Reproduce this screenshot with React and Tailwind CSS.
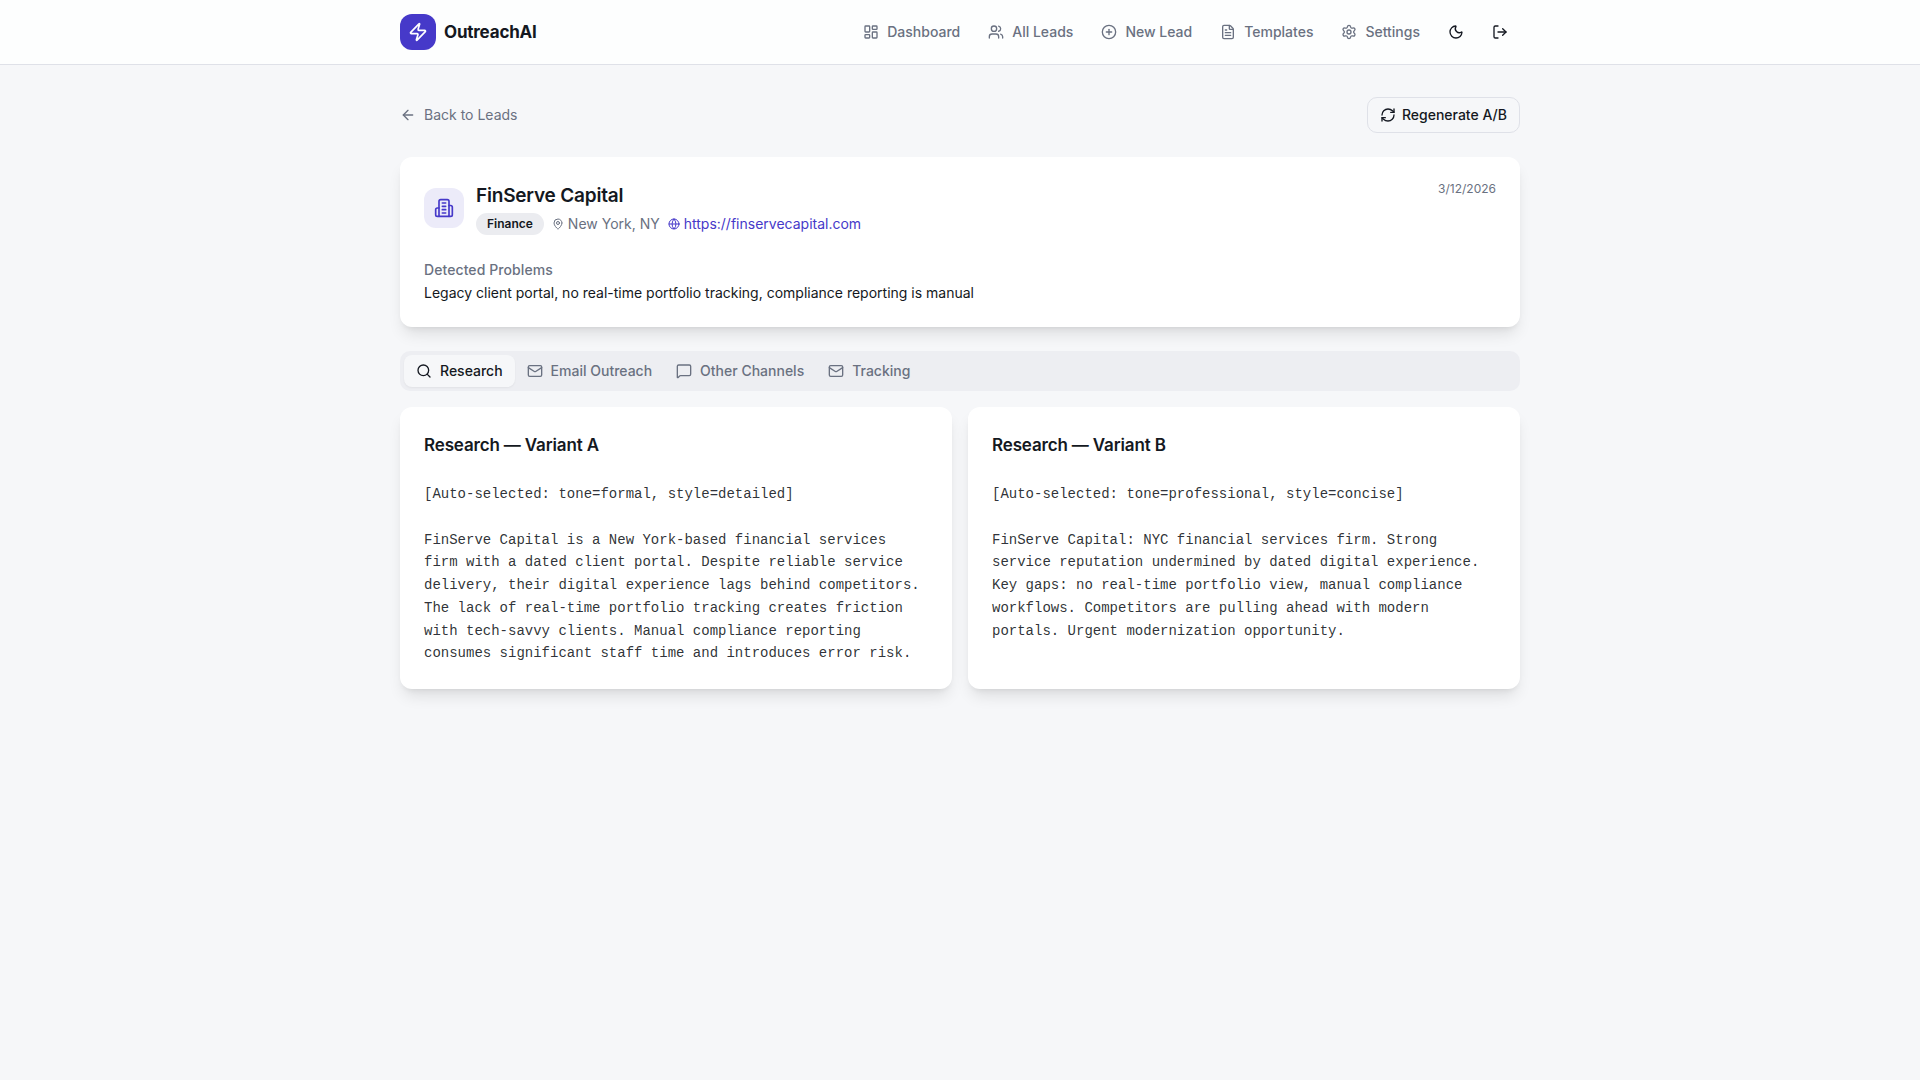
import React from 'react';
import {
  ArrowLeft,
  CirclePlus,
  FileText,
  Globe,
  LayoutDashboard,
  LogOut,
  Mail,
  MapPin,
  MessageSquare,
  Moon,
  RefreshCw,
  Search,
  Settings,
  Users,
  Zap,
} from 'lucide-react';

const navItems = [
  { label: 'Dashboard', icon: LayoutDashboard },
  { label: 'All Leads', icon: Users },
  { label: 'New Lead', icon: CirclePlus },
  { label: 'Templates', icon: FileText },
  { label: 'Settings', icon: Settings },
];

const tabs = [
  { label: 'Research', icon: Search },
  { label: 'Email Outreach', icon: Mail },
  { label: 'Other Channels', icon: MessageSquare },
  { label: 'Tracking', icon: Mail },
];

const variants = [
  {
    name: 'A',
    text: `[Auto-selected: tone=formal, style=detailed]

FinServe Capital is a New York-based financial services firm with a dated client portal. Despite reliable service delivery, their digital experience lags behind competitors. The lack of real-time portfolio tracking creates friction with tech-savvy clients. Manual compliance reporting consumes significant staff time and introduces error risk.`,
  },
  {
    name: 'B',
    text: `[Auto-selected: tone=professional, style=concise]

FinServe Capital: NYC financial services firm. Strong service reputation undermined by dated digital experience. Key gaps: no real-time portfolio view, manual compliance workflows. Competitors are pulling ahead with modern portals. Urgent modernization opportunity.`,
  },
];

const BuildingIcon = ({ className }) => (
  <svg
    className={className}
    viewBox="0 0 24 24"
    fill="none"
    stroke="currentColor"
    strokeWidth="2"
    strokeLinecap="round"
    strokeLinejoin="round"
  >
    <path d="M6 22V4a2 2 0 0 1 2-2h8a2 2 0 0 1 2 2v18Z" />
    <path d="M6 12H4a2 2 0 0 0-2 2v6a2 2 0 0 0 2 2h2" />
    <path d="M18 9h2a2 2 0 0 1 2 2v9a2 2 0 0 1-2 2h-2" />
    <path d="M10 6h4" />
    <path d="M10 10h4" />
    <path d="M10 14h4" />
    <path d="M10 18h4" />
  </svg>
);

const Header = () => (
  <header className="border-b border-[#dfe1e8] bg-[#fdfefe]">
    <div className="mx-auto flex h-16 max-w-6xl items-center justify-between px-4">
      <a className="flex items-center gap-2">
        <div className="flex h-9 w-9 items-center justify-center rounded-[12px] bg-[#4639c9]">
          <Zap className="h-5 w-5 text-white" />
        </div>
        <span className="text-[17px]/7 font-bold tracking-[-0.2px]">OutreachAI</span>
      </a>
      <nav className="flex items-center gap-1">
        {navItems.map(({ label, icon: Icon }) => (
          <button
            key={label}
            className="flex h-9 items-center gap-2 rounded-[10px] px-3 text-sm font-medium text-[#6a7181]"
          >
            <Icon className="h-4 w-4" />
            {label}
          </button>
        ))}
        <button className="flex h-10 w-10 items-center justify-center">
          <Moon className="h-4 w-4" />
        </button>
        <button className="flex h-10 w-10 items-center justify-center">
          <LogOut className="h-4 w-4" />
        </button>
      </nav>
    </div>
  </header>
);

const LeadCard = () => (
  <section className="rounded-[12px] bg-white p-6 shadow-lg">
    <div className="flex items-start justify-between">
      <div className="flex items-center gap-3">
        <div className="flex h-10 w-10 items-center justify-center rounded-[12px] bg-[#ecebf9]">
          <BuildingIcon className="h-5 w-5 text-[#4639c9]" />
        </div>
        <div>
          <h2 className="h-7 pt-px text-[19px]/7 font-semibold tracking-[-0.2px]">
            FinServe Capital
          </h2>
          <div className="mt-1 flex items-center gap-2 text-sm text-[#6a7181]">
            <span className="rounded-full border border-transparent bg-[#ebecf0] px-2.5 py-0.5 text-xs font-semibold text-[#141821]">
              Finance
            </span>
            <span className="flex h-[22px] items-center gap-1">
              <MapPin className="h-3 w-3" />
              New York, NY
            </span>
            <a className="flex h-[22px] items-center gap-1 text-[#4639c9]">
              <Globe className="h-3 w-3" />
              https://finservecapital.com
            </a>
          </div>
        </div>
      </div>
      <span className="text-xs text-[#6a7181]">3/12/2026</span>
    </div>
    <h4 className="mt-6 mb-1 h-5 pt-px text-sm font-medium tracking-[0.08px] text-[#6a7181]">
      Detected Problems
    </h4>
    <p className="text-sm">
      Legacy client portal, no real-time portfolio tracking, compliance reporting is manual
    </p>
  </section>
);

const Tabs = () => (
  <div className="mt-6 flex h-10 items-center rounded-[10px] bg-[#edeef2] p-1">
    {tabs.map(({ label, icon: Icon }, i) => (
      <button
        key={label}
        className={`flex h-8 items-center gap-2 rounded-[8px] px-3 text-sm font-medium ${
          i === 0 ? 'bg-[#f6f7f9] text-[#141821] shadow-xs' : 'text-[#6a7181]'
        }`}
      >
        <Icon className="h-4 w-4" />
        {label}
      </button>
    ))}
  </div>
);

const VariantCard = ({ name, text }) => (
  <section className="rounded-[12px] bg-white p-6 shadow-lg">
    <h3 className="h-7 text-[17px]/7 font-semibold tracking-[-0.15px]">
      Research — Variant {name}
    </h3>
    <p className="mt-6 font-['Liberation_Mono',monospace] text-sm leading-relaxed whitespace-pre-wrap text-[#141821]/90">
      {text}
    </p>
  </section>
);

export default function App() {
  return (
    <div className="min-h-screen bg-[#f6f7f9] font-['Inter',sans-serif] text-[#141821] antialiased">
      <Header />
      <main className="mx-auto max-w-6xl px-4 py-8">
        <div className="mb-6 flex items-center justify-between">
          <a className="flex items-center gap-2 text-sm text-[#6a7181]">
            <ArrowLeft className="h-4 w-4" />
            Back to Leads
          </a>
          <button className="flex h-9 items-center gap-1.5 rounded-[10px] border border-[#dfe1e8] px-3 text-sm font-medium">
            <RefreshCw className="h-4 w-4" />
            Regenerate A/B
          </button>
        </div>
        <LeadCard />
        <Tabs />
        <div className="mt-4 grid grid-cols-2 gap-4">
          {variants.map((v) => (
            <VariantCard key={v.name} name={v.name} text={v.text} />
          ))}
        </div>
      </main>
    </div>
  );
}
